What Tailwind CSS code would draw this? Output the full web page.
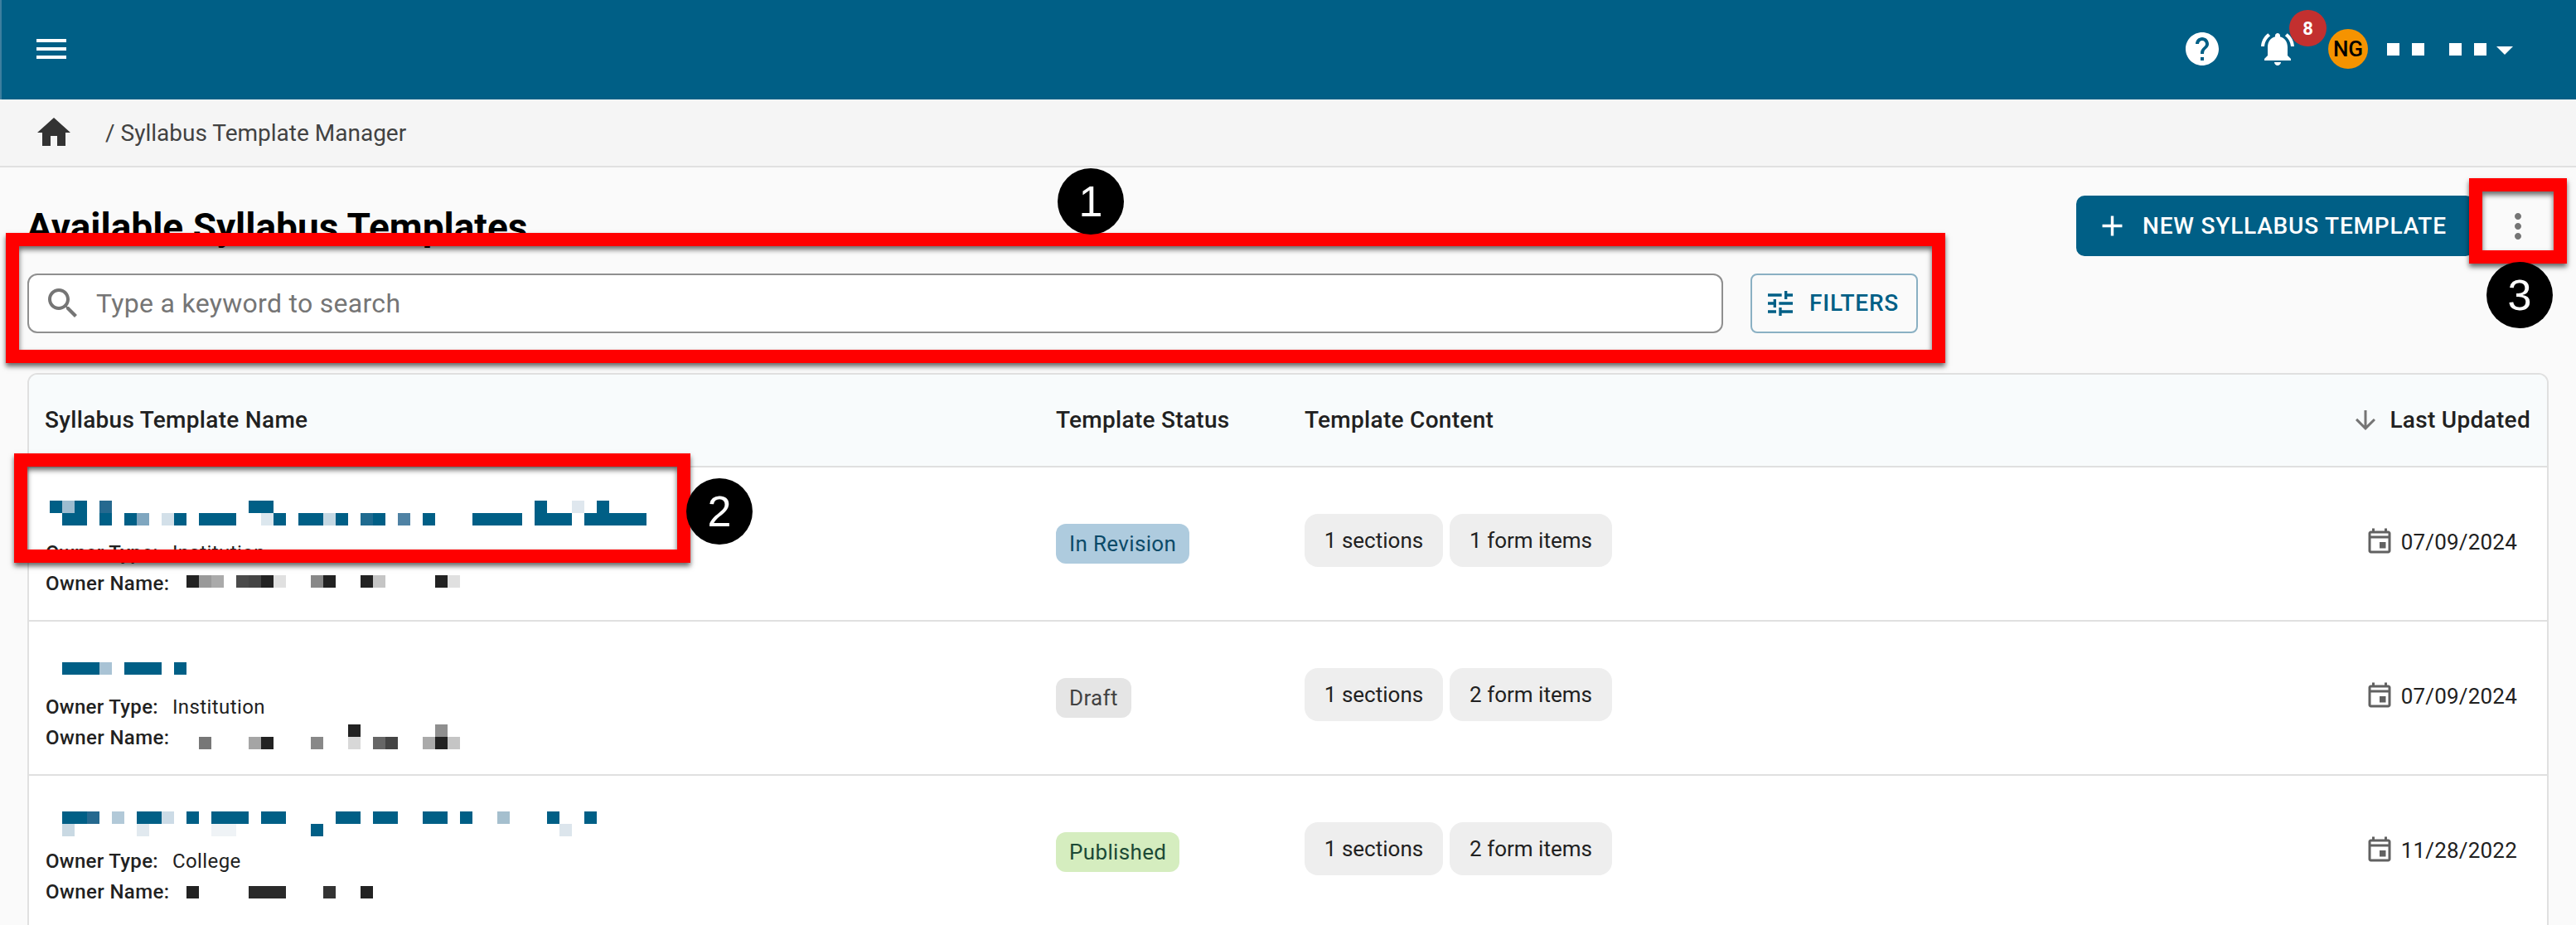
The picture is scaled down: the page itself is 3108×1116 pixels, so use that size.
<!DOCTYPE html>
<html lang="en">
<head>
<meta charset="utf-8">
<title>Syllabus Template Manager</title>
<script src="https://cdn.jsdelivr.net/npm/@tailwindcss/browser@4"></script>
</head>
<body class="m-0">
<div class="relative w-[3108px] h-[1116px] overflow-hidden bg-[#fafafa] font-['Roboto',sans-serif] text-[#212121]">

    <!-- top bar -->
    <header class="flex items-center justify-between h-[120px] pb-[2px] bg-[#005f86] border-l-2 border-l-[#3d7f9f] pl-[36px]">
        <svg class="w-[48px] h-[48px] fill-white" viewBox="0 0 24 24"><path d="M3 18h18v-2H3v2zm0-5h18v-2H3v2zm0-7v2h18V6H3z"/></svg>
        <div class="flex items-center h-full pr-[76px]">
            <svg class="w-[48px] h-[48px] fill-white" viewBox="0 0 24 24"><path d="M12 2C6.48 2 2 6.48 2 12s4.48 10 10 10 10-4.48 10-10S17.52 2 12 2zm1 17h-2v-2h2v2zm2.07-7.75l-.9.92C13.45 12.9 13 13.5 13 15h-2v-.5c0-1.1.45-2.1 1.17-2.83l1.24-1.26c.37-.36.59-.86.59-1.41 0-1.1-.9-2-2-2s-2 .9-2 2H8c0-2.21 1.79-4 4-4s4 1.79 4 4c0 .88-.36 1.68-.93 2.25z"/></svg>
            <div class="relative ml-[43px] w-[48px] h-[48px]">
                <svg class="w-[48px] h-[48px] fill-white" viewBox="0 0 24 24"><path d="M7.58 4.08L6.15 2.65C3.75 4.48 2.17 7.3 2.03 10.5h2c.15-2.65 1.51-4.97 3.55-6.42zm12.39 6.42h2c-.15-3.2-1.73-6.02-4.12-7.85l-1.42 1.43c2.02 1.45 3.39 3.77 3.54 6.42zM18 11c0-3.07-1.64-5.64-4.5-6.32V4c0-.83-.67-1.5-1.5-1.5s-1.5.67-1.5 1.5v.68C7.63 5.36 6 7.92 6 11v5l-2 2v1h16v-1l-2-2v-5zm-6 11c.14 0 .27-.01.4-.04.65-.14 1.18-.58 1.44-1.18.1-.24.15-.5.15-.78h-4c.01 1.1.9 2 2.01 2z"/></svg>
                <span class="absolute left-[38px] top-[-23px] flex items-center justify-center w-[45px] h-[44px] rounded-full bg-[#c3302f] text-white text-[22px] font-bold">8</span>
            </div>
            <span class="flex items-center justify-center ml-[37px] w-[48px] h-[48px] rounded-full bg-[#f59300] text-black text-[26px] font-medium">NG</span>
            <div class="flex items-center ml-[23px]">
                <span class="w-[15px] h-[15px] bg-white"></span>
                <span class="w-[15px] h-[15px] bg-white ml-[15px]"></span>
                <span class="w-[15px] h-[15px] bg-white ml-[30px]"></span>
                <span class="w-[15px] h-[15px] bg-white ml-[15px]"></span>
                <span class="ml-[12px] mt-[4px] w-0 h-0 border-x-[10px] border-x-transparent border-t-[10px] border-t-white"></span>
            </div>
        </div>
    </header>

    <!-- breadcrumb -->
    <nav class="flex items-center h-[82px] pl-[41px] bg-[#f5f5f5] border-b-2 border-[#e0e0e0] text-[#424242] text-[28px]">
        <svg class="w-[48px] h-[48px] fill-[#333333]" viewBox="0 0 24 24"><path d="M10 20v-6h4v6h5v-8h3L12 3 2 12h3v8z"/></svg>
        <span class="ml-[38px] pt-[2px]">/</span>
        <span class="ml-[7px] pt-[2px]">Syllabus Template Manager</span>
    </nav>

    <main class="px-[33px]">
        <div class="flex items-start justify-between pt-[34px] h-[128px]">
            <h1 class="text-[46px] leading-[56px] font-bold text-black mt-[10px] -ml-[1px]">Available Syllabus Templates</h1>
            <div class="flex items-center -mr-[3px]">
                <button type="button" class="flex items-center w-[480px] h-[73px] pl-[23px] rounded-[10px] bg-[#005f86] text-white text-[28px] font-medium tracking-[0.8px]">
                    <svg class="w-[41px] h-[41px] fill-white" viewBox="0 0 24 24"><path d="M19 13h-6v6h-2v-6H5v-2h6V5h2v6h6v2z"/></svg>
                    <span class="ml-[16px]">NEW SYLLABUS TEMPLATE</span>
                </button>
                <button type="button" class="flex items-center justify-center ml-[13px] w-[80px] h-[73px]">
                    <svg class="w-[48px] h-[48px] fill-[#757575]" viewBox="0 0 24 24"><path d="M12 8c1.1 0 2-.9 2-2s-.9-2-2-2-2 .9-2 2 .9 2 2 2zm0 2c-1.1 0-2 .9-2 2s.9 2 2 2 2-.9 2-2-.9-2-2-2zm0 6c-1.1 0-2 .9-2 2s.9 2 2 2 2-.9 2-2-.9-2-2-2z"/></svg>
                </button>
            </div>
        </div>

        <!-- search -->
        <div class="flex items-center">
            <div class="flex items-center w-[2046px] h-[72px] pl-[17px] rounded-[12px] bg-white border-2 border-[#8f8f8f]">
                <svg class="w-[48px] h-[48px] fill-[#757575]" viewBox="0 0 24 24"><path d="M15.5 14h-.79l-.28-.27C15.41 12.59 16 11.11 16 9.5 16 5.91 13.09 3 9.5 3S3 5.91 3 9.5 5.91 16 9.5 16c1.61 0 3.09-.59 4.23-1.57l.27.28v.79l5 4.99L20.49 19l-4.99-5zm-6 0C7.01 14 5 11.99 5 9.5S7.01 5 9.5 5 14 7.01 14 9.5 11.99 14 9.5 14z"/></svg>
                <span class="ml-[16px] text-[32px] tracking-[0.3px] text-[#757575]">Type a keyword to search</span>
            </div>
            <button type="button" class="flex items-center ml-[33px] w-[202px] h-[72px] pl-[14px] rounded-[8px] border-2 border-[#8ab0c3] text-[#005f86] text-[28px] font-medium tracking-[0.8px]">
                <svg class="w-[40px] h-[40px] fill-[#005f86]" viewBox="0 0 24 24"><path d="M3 17v2h6v-2H3zM3 5v2h10V5H3zm10 16v-2h8v-2h-8v-2h-2v6h2zM7 9v2H3v2h4v2h2V9H7zm14 4v-2H11v2h10zm-6-4h2V7h4V5h-4V3h-2v6z"/></svg>
                <span class="ml-[15px]">FILTERS</span>
            </button>
        </div>

        <!-- templates table -->
        <div class="mt-[48px] w-[3042px] bg-white border-2 border-[#e0e0e0] rounded-t-[12px]">
            <div class="grid grid-cols-[1239px_300px_1fr_auto] items-center h-[112px] rounded-t-[10px] bg-[#f8fbfc] border-b-2 border-[#e0e0e0] text-[28px] font-medium tracking-[0.3px]">
                <div class="pl-[19px]">Syllabus Template Name</div>
                <div>Template Status</div>
                <div>Template Content</div>
                <div class="flex items-center pr-[20px]">
                    <svg class="w-[36px] h-[36px] fill-[#757575]" viewBox="0 0 24 24"><path d="M20 12l-1.41-1.41L13 16.17V4h-2v12.17l-5.58-5.59L4 12l8 8 8-8z"/></svg>
                    <span class="ml-[11px]">Last Updated</span>
                </div>
            </div>

            <!-- row 1 -->
            <div class="grid grid-cols-[1239px_300px_1fr_auto] items-center h-[186px] border-b-2 border-[#e0e0e0]">
                <div class="self-start pl-[20px] text-[24px]">
                    <div class="h-[85px] pt-[40px] pl-[5px]">
                        <svg width="750" height="30" shape-rendering="crispEdges" fill="#005f86">
                            <rect x="0" y="0" width="15" height="15"/><rect x="15" y="0" width="15" height="15" fill="#9dbcd0"/><rect x="30" y="0" width="15" height="15"/><rect x="60" y="0" width="15" height="15" fill="#26698f"/><rect x="240" y="0" width="30" height="15"/><rect x="585" y="0" width="15" height="15"/><rect x="630" y="0" width="15" height="15" fill="#dfe7ee"/><rect x="660" y="0" width="15" height="15"/>
                            <rect x="15" y="15" width="30" height="15"/><rect x="60" y="15" width="15" height="15"/><rect x="90" y="15" width="15" height="15"/><rect x="105" y="15" width="15" height="15" fill="#7fa6bf"/><rect x="135" y="15" width="15" height="15" fill="#d3e0e9"/><rect x="150" y="15" width="15" height="15"/><rect x="180" y="15" width="45" height="15"/><rect x="255" y="15" width="15" height="15" fill="#dce7ee"/><rect x="270" y="15" width="15" height="15"/><rect x="300" y="15" width="30" height="15"/><rect x="330" y="15" width="15" height="15" fill="#c5d8e3"/><rect x="345" y="15" width="15" height="15"/><rect x="375" y="15" width="15" height="15" fill="#1f6b90"/><rect x="390" y="15" width="15" height="15"/><rect x="420" y="15" width="15" height="15" fill="#4f82a4"/><rect x="450" y="15" width="15" height="15"/><rect x="510" y="15" width="60" height="15"/><rect x="585" y="15" width="45" height="15"/><rect x="645" y="15" width="75" height="15"/>
                        </svg>
                    </div>
                    <div class="h-[37px] leading-[37px]"><span class="font-medium tracking-[0.3px]">Owner Type:</span><span class="ml-[17px] tracking-[0.4px]">Institution</span></div>
                    <div class="flex items-start h-[37px] leading-[37px]">
                        <span class="w-[170px] font-medium tracking-[0.4px]">Owner Name:</span>
                        <svg class="mt-[8px]" width="330" height="15" shape-rendering="crispEdges">
                            <rect x="0" y="0" width="15" height="15" fill="#222222"/><rect x="15" y="0" width="15" height="15" fill="#999999"/><rect x="30" y="0" width="15" height="15" fill="#aaaaaa"/><rect x="60" y="0" width="15" height="15" fill="#4a4a4a"/><rect x="75" y="0" width="15" height="15" fill="#444444"/><rect x="90" y="0" width="15" height="15" fill="#222222"/><rect x="105" y="0" width="15" height="15" fill="#e0e0e0"/><rect x="150" y="0" width="15" height="15" fill="#888888"/><rect x="165" y="0" width="15" height="15" fill="#222222"/><rect x="210" y="0" width="15" height="15" fill="#222222"/><rect x="225" y="0" width="15" height="15" fill="#c5c5c5"/><rect x="300" y="0" width="15" height="15" fill="#222222"/><rect x="315" y="0" width="15" height="15" fill="#e0e0e0"/>
                        </svg>
                    </div>
                </div>
                <div><span class="inline-flex items-center h-[48px] px-[16px] rounded-[12px] bg-[#aecbde] text-[#0b4a68] text-[26px] tracking-[0.35px]">In Revision</span></div>
                <div class="flex gap-[8px] -mt-[8px] text-[26px]">
                    <span class="flex items-center justify-center w-[167px] h-[64px] rounded-[16px] bg-[#eeeeee]">1 sections</span>
                    <span class="flex items-center justify-center w-[196px] h-[64px] rounded-[16px] bg-[#eeeeee]">1 form items</span>
                </div>
                <div class="flex items-center -mt-[4px] pr-[36px] text-[26px] tracking-[0.2px]">
                    <svg class="w-[36px] h-[36px] fill-[#616161]" viewBox="0 0 24 24"><path d="M17 12h-5v5h5v-5zM19 3h-1V1h-2v2H8V1H6v2H5c-1.11 0-1.99.9-1.99 2L3 19c0 1.1.89 2 2 2h14c1.1 0 2-.9 2-2V5c0-1.1-.9-2-2-2zm0 16H5V9h14v10zM5 7V5h14v2H5z"/></svg>
                    <span class="ml-[8px]">07/09/2024</span>
                </div>
            </div>

            <!-- row 2 -->
            <div class="grid grid-cols-[1239px_300px_1fr_auto] items-center h-[186px] border-b-2 border-[#e0e0e0]">
                <div class="self-start pl-[20px] text-[24px]">
                    <div class="h-[85px] pt-[49px] pl-[5px]">
                        <svg width="750" height="15" shape-rendering="crispEdges" fill="#005f86">
                            <rect x="15" y="0" width="45" height="15"/><rect x="60" y="0" width="15" height="15" fill="#a9c3d5"/><rect x="90" y="0" width="45" height="15"/><rect x="150" y="0" width="15" height="15"/>
                        </svg>
                    </div>
                    <div class="h-[37px] leading-[37px]"><span class="font-medium tracking-[0.3px]">Owner Type:</span><span class="ml-[17px] tracking-[0.4px]">Institution</span></div>
                    <div class="flex items-start h-[37px] leading-[37px]">
                        <span class="w-[170px] font-medium tracking-[0.4px]">Owner Name:</span>
                        <svg class="mt-[2px]" width="330" height="30" shape-rendering="crispEdges">
                            <rect x="195" y="0" width="15" height="15" fill="#222222"/><rect x="300" y="0" width="15" height="15" fill="#8f8f8f"/>
                            <rect x="15" y="15" width="15" height="15" fill="#777777"/><rect x="75" y="15" width="15" height="15" fill="#a5a5a5"/><rect x="90" y="15" width="15" height="15" fill="#222222"/><rect x="150" y="15" width="15" height="15" fill="#888888"/><rect x="195" y="15" width="15" height="15" fill="#d8d8d8"/><rect x="225" y="15" width="15" height="15" fill="#666666"/><rect x="240" y="15" width="15" height="15" fill="#444444"/><rect x="285" y="15" width="15" height="15" fill="#aaaaaa"/><rect x="300" y="15" width="15" height="15" fill="#222222"/><rect x="315" y="15" width="15" height="15" fill="#c5c5c5"/>
                        </svg>
                    </div>
                </div>
                <div><span class="inline-flex items-center h-[48px] px-[16px] rounded-[12px] bg-[#e5e5e5] text-[#424242] text-[26px] tracking-[0.35px]">Draft</span></div>
                <div class="flex gap-[8px] -mt-[8px] text-[26px]">
                    <span class="flex items-center justify-center w-[167px] h-[64px] rounded-[16px] bg-[#eeeeee]">1 sections</span>
                    <span class="flex items-center justify-center w-[196px] h-[64px] rounded-[16px] bg-[#eeeeee]">2 form items</span>
                </div>
                <div class="flex items-center -mt-[4px] pr-[36px] text-[26px] tracking-[0.2px]">
                    <svg class="w-[36px] h-[36px] fill-[#616161]" viewBox="0 0 24 24"><path d="M17 12h-5v5h5v-5zM19 3h-1V1h-2v2H8V1H6v2H5c-1.11 0-1.99.9-1.99 2L3 19c0 1.1.89 2 2 2h14c1.1 0 2-.9 2-2V5c0-1.1-.9-2-2-2zm0 16H5V9h14v10zM5 7V5h14v2H5z"/></svg>
                    <span class="ml-[8px]">07/09/2024</span>
                </div>
            </div>

            <!-- row 3 -->
            <div class="grid grid-cols-[1239px_300px_1fr_auto] items-center h-[186px] border-b-2 border-[#e0e0e0]">
                <div class="self-start pl-[20px] text-[24px]">
                    <div class="h-[85px] pt-[43px] pl-[5px]">
                        <svg width="750" height="30" shape-rendering="crispEdges" fill="#005f86">
                            <rect x="15" y="0" width="30" height="15"/><rect x="45" y="0" width="15" height="15" fill="#26698f"/><rect x="75" y="0" width="15" height="15" fill="#b2c9d8"/><rect x="105" y="0" width="30" height="15"/><rect x="135" y="0" width="15" height="15" fill="#ccdbe6"/><rect x="165" y="0" width="15" height="15"/><rect x="195" y="0" width="45" height="15"/><rect x="255" y="0" width="30" height="15"/><rect x="345" y="0" width="30" height="15"/><rect x="390" y="0" width="30" height="15"/><rect x="450" y="0" width="30" height="15"/><rect x="495" y="0" width="15" height="15"/><rect x="540" y="0" width="15" height="15" fill="#a5bfce"/><rect x="600" y="0" width="15" height="15"/><rect x="645" y="0" width="15" height="15"/>
                            <rect x="15" y="15" width="15" height="15" fill="#c9d9e3"/><rect x="105" y="15" width="15" height="15" fill="#e1e9ef"/><rect x="195" y="15" width="30" height="15" fill="#eff3f6"/><rect x="315" y="15" width="15" height="15"/><rect x="615" y="15" width="15" height="15" fill="#dce5ec"/>
                        </svg>
                    </div>
                    <div class="h-[37px] leading-[37px]"><span class="font-medium tracking-[0.3px]">Owner Type:</span><span class="ml-[17px] tracking-[0.4px]">College</span></div>
                    <div class="flex items-start h-[37px] leading-[37px]">
                        <span class="w-[170px] font-medium tracking-[0.4px]">Owner Name:</span>
                        <svg class="mt-[11px]" width="330" height="15" shape-rendering="crispEdges">
                            <rect x="0" y="0" width="15" height="15" fill="#222222"/><rect x="75" y="0" width="45" height="15" fill="#2a2a2a"/><rect x="165" y="0" width="15" height="15" fill="#333333"/><rect x="210" y="0" width="15" height="15" fill="#222222"/>
                        </svg>
                    </div>
                </div>
                <div><span class="inline-flex items-center h-[48px] px-[16px] rounded-[12px] bg-[#d5edbf] text-[#1c4a36] text-[26px] tracking-[0.35px]">Published</span></div>
                <div class="flex gap-[8px] -mt-[8px] text-[26px]">
                    <span class="flex items-center justify-center w-[167px] h-[64px] rounded-[16px] bg-[#eeeeee]">1 sections</span>
                    <span class="flex items-center justify-center w-[196px] h-[64px] rounded-[16px] bg-[#eeeeee]">2 form items</span>
                </div>
                <div class="flex items-center -mt-[4px] pr-[36px] text-[26px] tracking-[0.2px]">
                    <svg class="w-[36px] h-[36px] fill-[#616161]" viewBox="0 0 24 24"><path d="M17 12h-5v5h5v-5zM19 3h-1V1h-2v2H8V1H6v2H5c-1.11 0-1.99.9-1.99 2L3 19c0 1.1.89 2 2 2h14c1.1 0 2-.9 2-2V5c0-1.1-.9-2-2-2zm0 16H5V9h14v10zM5 7V5h14v2H5z"/></svg>
                    <span class="ml-[8px]">11/28/2022</span>
                </div>
            </div>
        </div>
    </main>

    <!-- annotation overlays -->
    <div class="absolute left-[7px] top-[281px] w-[2340px] h-[157px] border-[16px] border-[#ff0000] shadow-[0_4px_6px_rgba(0,0,0,0.6),inset_0_4px_6px_rgba(0,0,0,0.6)]"></div>
    <div class="absolute left-[17px] top-[547px] w-[816px] h-[132px] border-[16px] border-[#ff0000] shadow-[0_4px_6px_rgba(0,0,0,0.6),inset_0_4px_6px_rgba(0,0,0,0.6)]"></div>
    <div class="absolute left-[2979px] top-[215px] w-[118px] h-[103px] border-[16px] border-[#ff0000] shadow-[0_4px_6px_rgba(0,0,0,0.6),inset_0_4px_6px_rgba(0,0,0,0.6)]"></div>
    <div class="absolute left-[1276px] top-[203px] flex items-center justify-center w-[80px] h-[80px] rounded-full bg-black text-white font-['Liberation_Sans',sans-serif] text-[52px]">1</div>
    <div class="absolute left-[828px] top-[577px] flex items-center justify-center w-[80px] h-[80px] rounded-full bg-black text-white font-['Liberation_Sans',sans-serif] text-[52px]">2</div>
    <div class="absolute left-[3000px] top-[316px] flex items-center justify-center w-[80px] h-[80px] rounded-full bg-black text-white font-['Liberation_Sans',sans-serif] text-[52px]">3</div>
</div>
</body>
</html>
